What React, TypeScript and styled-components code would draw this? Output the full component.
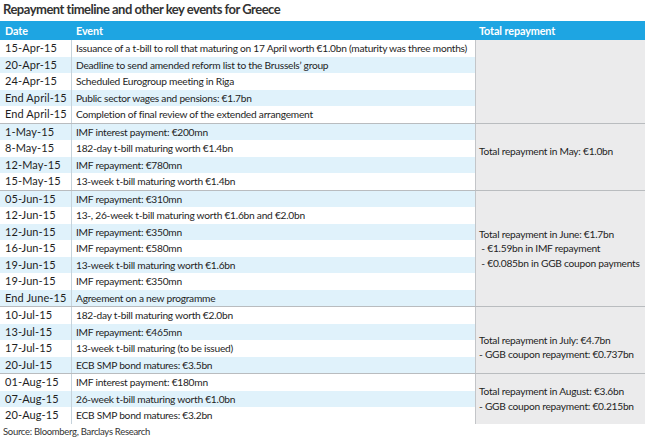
import React from "react";
import styled, { createGlobalStyle } from "styled-components";

type Item = { date: string; event: string };
type Group = { items: Item[]; total: string[]; shift?: number };

const groups: Group[] = [
  {
    items: [
      {
        date: "15-Apr-15",
        event:
          "Issuance of a t-bill to roll that maturing on 17 April worth €1.0bn (maturity was three months)",
      },
      { date: "20-Apr-15", event: "Deadline to send amended reform list to the Brussels’ group" },
      { date: "24-Apr-15", event: "Scheduled Eurogroup meeting in Riga" },
      { date: "End April-15", event: "Public sector wages and pensions: €1.7bn" },
      { date: "End April-15", event: "Completion of final review of the extended arrangement" },
    ],
    total: [],
  },
  {
    items: [
      { date: "1-May-15", event: "IMF interest payment: €200mn" },
      { date: "8-May-15", event: "182-day t-bill maturing worth €1.4bn" },
      { date: "12-May-15", event: "IMF repayment: €780mn" },
      { date: "15-May-15", event: "13-week t-bill maturing worth €1.4bn" },
    ],
    total: ["Total repayment in May: €1.0bn"],
    shift: -5,
  },
  {
    items: [
      { date: "05-Jun-15", event: "IMF repayment: €310mn" },
      { date: "12-Jun-15", event: "13-, 26-week t-bill maturing worth €1.6bn and €2.0bn" },
      { date: "12-Jun-15", event: "IMF repayment: €350mn" },
      { date: "16-Jun-15", event: "IMF repayment: €580mn" },
      { date: "19-Jun-15", event: "13-week t-bill maturing worth €1.6bn" },
      { date: "19-Jun-15", event: "IMF repayment: €350mn" },
      { date: "End June-15", event: "Agreement on a new programme" },
    ],
    total: [
      "Total repayment in June: €1.7bn",
      " - €1.59bn in IMF repayment",
      " - €0.085bn in GGB coupon payments",
    ],
  },
  {
    items: [
      { date: "10-Jul-15", event: "182-day t-bill maturing worth €2.0bn" },
      { date: "13-Jul-15", event: "IMF repayment: €465mn" },
      { date: "17-Jul-15", event: "13-week t-bill maturing (to be issued)" },
      { date: "20-Jul-15", event: "ECB SMP bond matures: €3.5bn" },
    ],
    total: ["Total repayment in July: €4.7bn", "- GGB coupon repayment: €0.737bn"],
    shift: 7,
  },
  {
    items: [
      { date: "01-Aug-15", event: "IMF interest payment: €180mn" },
      { date: "07-Aug-15", event: "26-week t-bill maturing worth €1.0bn" },
      { date: "20-Aug-15", event: "ECB SMP bond matures: €3.2bn" },
    ],
    total: ["Total repayment in August: €3.6bn", "- GGB coupon repayment: €0.215bn"],
  },
];

const App = () => {
  let index = 0;
  return (
    <Page>
      <GlobalStyle />
      <Title>Repayment timeline and other key events for Greece</Title>
      <Table>
        <Header>
          <HeadCell>Date</HeadCell>
          <HeadCell>Event</HeadCell>
          <HeadCell>Total repayment</HeadCell>
        </Header>
        {groups.map((group, g) => (
          <GroupRow key={g} $first={g === 0}>
            <Rows>
              {group.items.map((item) => {
                const alt = index % 2 === 1;
                index += 1;
                return (
                  <Row key={index} $alt={alt}>
                    <DateCell>{item.date}</DateCell>
                    <EventCell>{item.event}</EventCell>
                  </Row>
                );
              })}
            </Rows>
            <TotalCell $shift={group.shift ?? 0}>
              {group.total.map((line) => (
                <div key={line}>{line}</div>
              ))}
            </TotalCell>
          </GroupRow>
        ))}
      </Table>
      <Source>Source: Bloomberg, Barclays Research</Source>
    </Page>
  );
};

export default App;

const GlobalStyle = createGlobalStyle`
  body {
    margin: 0;
    background: #fff;
    font-family: Lato, "Liberation Sans", sans-serif;
    color: #1e1e1e;
  }
`;

const Page = styled.div`
  width: 650px;
  height: 437px;
  overflow: hidden;
`;

const Title = styled.div`
  height: 21px;
  padding-left: 3px;
  font-size: 13px;
  font-weight: 700;
  letter-spacing: -0.5px;
  line-height: 19px;
  color: #333;
`;

const Table = styled.div`
  width: 645px;
`;

const Header = styled.div`
  display: grid;
  grid-template-columns: 72px 403px 170px;
  height: 19px;
  background: #1ea5e2;
`;

const HeadCell = styled.div`
  padding-left: 5px;
  line-height: 19px;
  font-size: 10.8px;
  font-weight: 700;
  letter-spacing: -0.1px;
  color: #fff;

  & + & {
    padding-left: 4px;
  }
`;

const GroupRow = styled.div<{ $first: boolean }>`
  display: flex;
  border-top: ${(p) => (p.$first ? "none" : "1px solid #b9bcbf")};
`;

const Rows = styled.div`
  flex: none;
  width: 475px;
  border-right: 1px solid #c3c5c8;
`;

const Row = styled.div<{ $alt: boolean }>`
  display: grid;
  grid-template-columns: 72px 1fr;
  height: 16.5px;
  background: ${(p) => (p.$alt ? "#e0f2fb" : "#fff")};
  line-height: 16.5px;
  white-space: nowrap;
`;

const DateCell = styled.div`
  padding-left: 5px;
  border-right: 1px solid #c6d3dc;
  font-size: 11px;
  letter-spacing: 0.1px;
`;

const EventCell = styled.div`
  padding-left: 4px;
  font-size: 10.2px;
  letter-spacing: -0.25px;
`;

const TotalCell = styled.div<{ $shift: number }>`
  flex: 1;
  display: flex;
  flex-direction: column;
  justify-content: center;
  padding-left: 3px;
  padding-top: ${(p) => Math.max(p.$shift, 0) * 2}px;
  padding-bottom: ${(p) => Math.max(-p.$shift, 0) * 2}px;
  background: #ebebec;
  font-size: 10.2px;
  letter-spacing: -0.25px;
  line-height: 14.5px;
  white-space: pre;
`;

const Source = styled.div`
  padding: 1px 0 0 3px;
  font-size: 9.5px;
  letter-spacing: -0.3px;
  line-height: 13px;
  color: #333;
`;
